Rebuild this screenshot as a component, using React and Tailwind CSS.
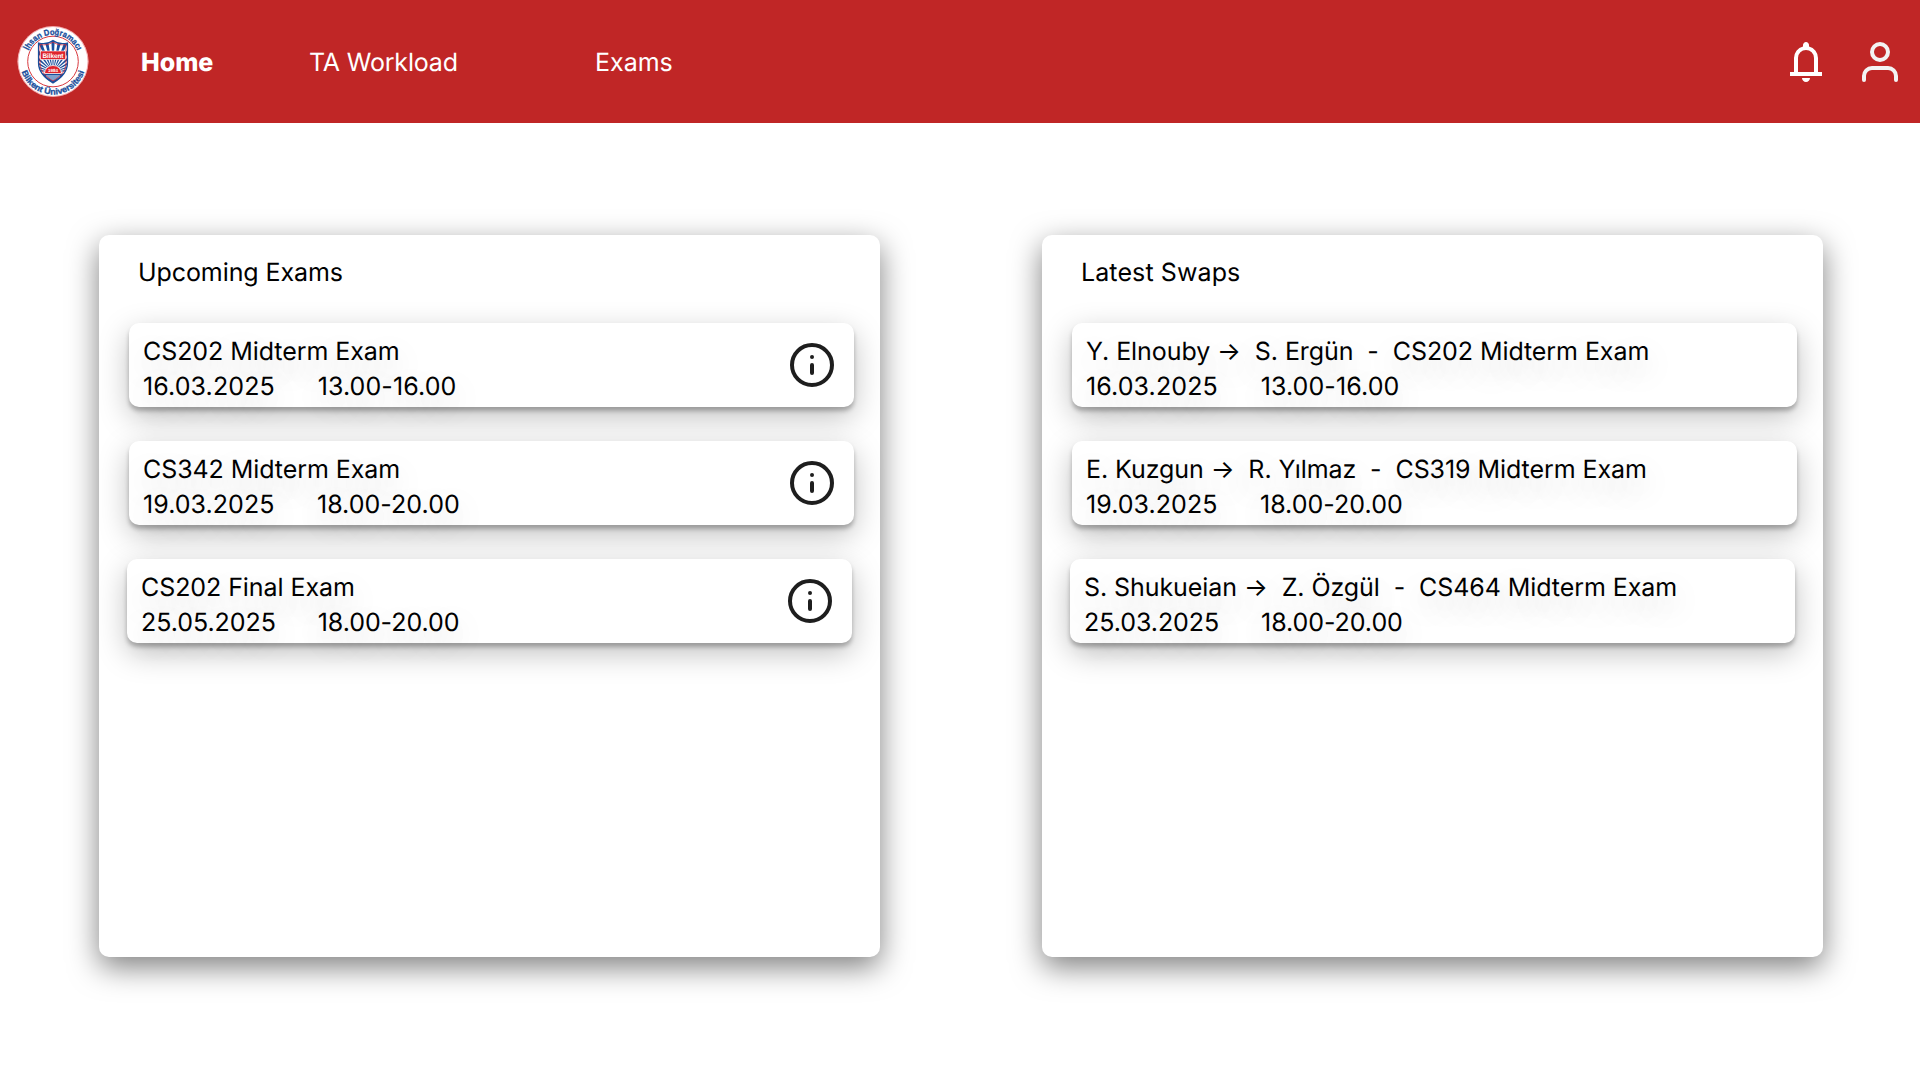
const EXAMS = [
  { title: 'CS202 Midterm Exam', date: '16.03.2025', time: '13.00-16.00', tracking: 'tracking-[0.11px]' },
  { title: 'CS342 Midterm Exam', date: '19.03.2025', time: '18.00-20.00', tracking: 'tracking-[0.05px]' },
  { title: 'CS202 Final Exam', date: '25.05.2025', time: '18.00-20.00', tracking: 'tracking-[-0.05px]', nudged: true },
];

const SWAPS = [
  { title: 'Y. Elnouby →  S. Ergün  -  CS202 Midterm Exam', date: '16.03.2025', time: '13.00-16.00', tracking: 'tracking-[0.11px]' },
  { title: 'E. Kuzgun →  R. Yılmaz  -  CS319 Midterm Exam', date: '19.03.2025', time: '18.00-20.00', tracking: 'tracking-[0.05px]' },
  { title: 'S. Shukueian →  Z. Özgül  -  CS464 Midterm Exam', date: '25.03.2025', time: '18.00-20.00', tracking: 'tracking-[-0.05px]', nudged: true },
];

const RAYS = [-84, -72, -60, -48, -36, -24, -12, 0, 12, 24, 36, 48, 60, 72, 84];

function Logo() {
  return (
    <svg className="size-[72px] shrink-0" viewBox="0 0 72 72">
      <defs>
        <path id="ring-top" d="M9.400 35.500a26.600 26.600 0 0 1 53.200 0" />
        <path id="ring-bottom" d="M3 35.500a33 33 0 0 0 66 0" />
        <clipPath id="shield">
          <path d="M36 14.500c4 3 9 4 14.500 2.500v20c0 9-6 15-14.500 20c-8.500-5-14.500-11-14.500-20v-20c5.500 1.500 10.500.500 14.500-2.500z" />
        </clipPath>
      </defs>
      <circle cx="36" cy="35.500" r="35.500" fill="#fff" />
      <circle cx="36" cy="35.500" r="35" fill="none" stroke="#e0242c" strokeWidth="0.400" />
      <circle cx="36" cy="35.500" r="25.300" fill="none" stroke="#d8383e" strokeWidth="1" />
      <g fill="#1a4f9c" stroke="#1a4f9c" strokeWidth="0.300" fontFamily="Liberation Sans, Arial, sans-serif" fontWeight="700" fontSize="8.400">
        <text textAnchor="middle" textLength="61" lengthAdjust="spacingAndGlyphs">
          <textPath href="#ring-top" startOffset="50%">İhsan Doğramacı</textPath>
        </text>
        <text textAnchor="middle" textLength="83" lengthAdjust="spacingAndGlyphs">
          <textPath href="#ring-bottom" startOffset="50%">Bilkent Üniversitesi</textPath>
        </text>
      </g>
      <g clipPath="url(#shield)">
        <rect x="20" y="12" width="32" height="46" fill="#fff" />
        {RAYS.map((angle) => (
          <path key={angle} d="M36 46L33.800 5h4.400z" fill="#1a4f9c" transform={`rotate(${angle} 36 46)`} />
        ))}
        <path d="M20 47.500h32v12H20z" fill="#1a4f9c" />
        <path d="M29 49h14v2l-7 4l-7-4z" fill="#7fa0cc" />
        <path d="M27.500 47.500a8.500 8 0 0 1 17 0z" fill="#e0242c" stroke="#fff" strokeWidth="0.700" />
      </g>
      <path d="M36 14.500c4 3 9 4 14.500 2.500v20c0 9-6 15-14.500 20c-8.500-5-14.500-11-14.500-20v-20c5.500 1.500 10.500.500 14.500-2.500z" fill="none" stroke="#1a4f9c" strokeWidth="1.200" />
      <path d="M36 16.200c4 2.500 8.500 3.300 13 2.300v18.500c0 8-5.500 13.500-13 18c-7.500-4.500-13-10-13-18V18.500c4.500 1 9 .2 13-2.300z" fill="none" stroke="#e0242c" strokeWidth="0.700" />
      <rect x="23.500" y="25" width="25" height="8.500" fill="#e0242c" stroke="#fff" strokeWidth="0.600" />
      <g fill="#fff" fontFamily="Liberation Sans, Arial, sans-serif" fontWeight="700" textAnchor="middle">
        <text x="36" y="31.600" fontSize="6.500" textLength="21">Bilkent</text>
        <text x="36" y="46.200" fontSize="4.500" textLength="10">1984</text>
      </g>
    </svg>
  );
}

function BellIcon() {
  return (
    <svg className="size-12" viewBox="0 -960 960 960" fill="#fff">
      <path d="M160-200v-80h80v-280q0-83 50-147.500T420-792v-28q0-25 17.500-42.500T480-880q25 0 42.500 17.500T540-820v28q80 20 130 84.500T720-560v280h80v80H160Zm320 120q-33 0-56.500-23.500T400-160h160q0 33-23.500 56.500T480-80ZM320-280h320v-280q0-66-47-113t-113-47q-66 0-113 47t-47 113v280Z" />
    </svg>
  );
}

function UserIcon() {
  return (
    <svg className="size-12" viewBox="0 0 24 24" fill="none" stroke="#f3f3f3" strokeWidth="2" strokeLinecap="round" strokeLinejoin="round">
      <path d="M20 21v-2a4 4 0 0 0-4-4H8a4 4 0 0 0-4 4v2" />
      <circle cx="12" cy="7" r="4" />
    </svg>
  );
}

function InfoIcon() {
  return (
    <svg className="size-12 shrink-0" viewBox="0 0 24 24" fill="none" stroke="#1e1e1e" strokeWidth="2" strokeLinecap="round" strokeLinejoin="round">
      <circle cx="12" cy="12" r="10" />
      <path d="M12 16v-4M12 8h.01" />
    </svg>
  );
}

function Entry({ title, date, time, tracking, nudged, info }) {
  return (
    <li
      className={`flex h-[84px] w-[725px] items-center justify-between rounded-[10px] bg-white pr-[18px] pl-[14px] shadow-[0_4px_4px_rgba(0,0,0,0.25),0_10px_30px_rgba(0,0,0,0.25)] ${nudged ? '-ml-0.5' : ''}`}
    >
      <div className="pt-[9px] leading-[35px] whitespace-pre [text-shadow:0_12px_30px_rgba(0,0,0,0.22)]">
        <p className="tracking-[-0.07px]">{title}</p>
        <p className={tracking}>{`${date}      ${time}`}</p>
      </div>
      {info && <InfoIcon />}
    </li>
  );
}

function Panel({ heading, headingTracking, entries, info }) {
  return (
    <section className="h-[722px] w-[781px] rounded-[10px] bg-white pl-[30px] shadow-[0_10px_30px_rgba(0,0,0,0.5)]">
      <h2 className={`flex h-[88px] items-start pt-[21px] pl-[9px] leading-[35px] ${headingTracking}`}>{heading}</h2>
      <ul className="flex flex-col gap-[34px]">
        {entries.map((entry) => (
          <Entry key={entry.title} {...entry} info={info} />
        ))}
      </ul>
    </section>
  );
}

export default function App() {
  return (
    <div className="h-[1080px] w-[1920px] overflow-hidden bg-white font-['Inter',sans-serif] text-[25px] text-black [text-rendering:geometricPrecision]">
      <header className="flex h-[123px] items-center bg-[#c02626] pr-4 pl-[17px] text-white">
        <Logo />
        <nav className="ml-[52px] flex grow items-center pt-1">
          <a className="w-[168px] font-extrabold">Home</a>
          <a className="w-[286px] tracking-[-0.18px]">TA Workload</a>
          <a>Exams</a>
        </nav>
        <div className="flex items-center gap-[26px]">
          <BellIcon />
          <UserIcon />
        </div>
      </header>
      <main className="flex gap-[162px] pt-28 pl-[99px]">
        <Panel heading="Upcoming Exams" headingTracking="tracking-[-0.08px]" entries={EXAMS} info />
        <Panel heading="Latest Swaps" headingTracking="tracking-[0.1px]" entries={SWAPS} />
      </main>
    </div>
  );
}
